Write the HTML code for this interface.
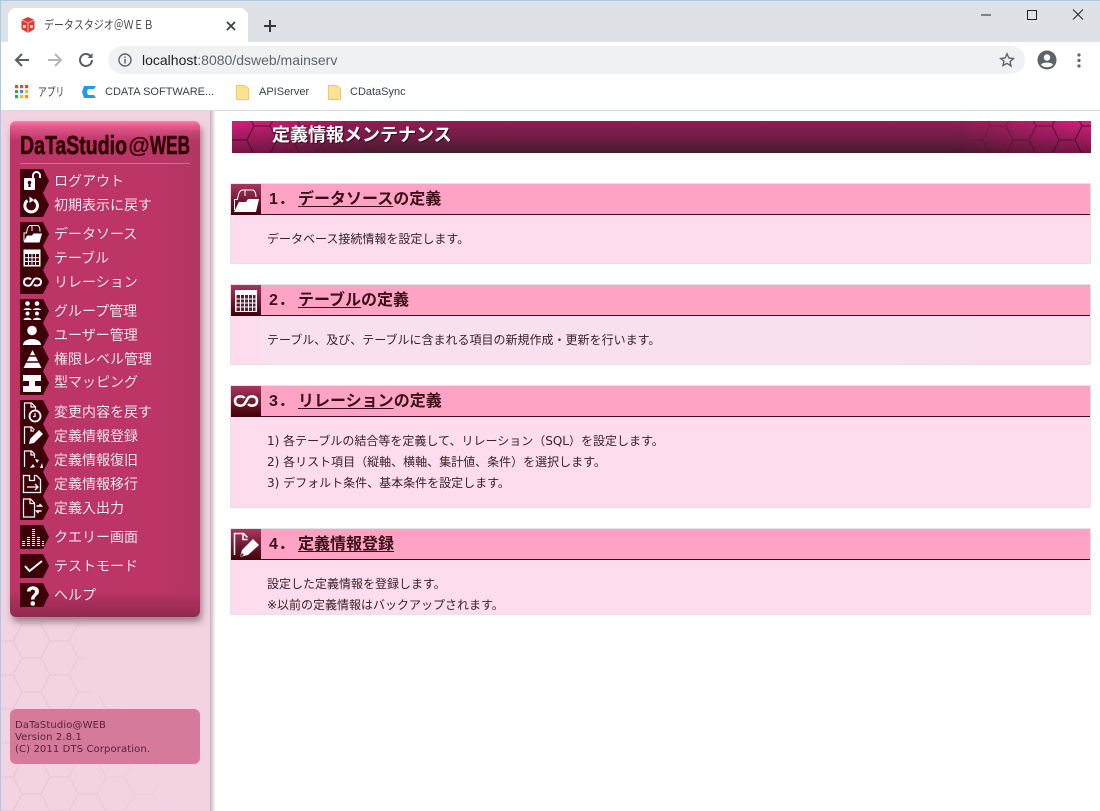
<!DOCTYPE html>
<html lang="ja"><head><meta charset="utf-8"><title>データスタジオ＠ＷＥＢ</title>
<style>
html,body{margin:0;padding:0;background:#fff;width:1100px;height:811px;overflow:hidden}
body{position:relative;font-family:"Liberation Sans","Noto Sans CJK JP",sans-serif;color:#333}
.a{position:absolute}
.t{position:absolute;white-space:nowrap;line-height:1}
.m{position:absolute;left:54px;white-space:nowrap;font-size:14px;line-height:20px;color:#fdeaf1;text-shadow:0 0 1px #8a2048}
.ic{position:absolute;left:20px;width:29px;height:24px}
.sec{position:absolute;left:230px;width:861px;border:1px solid #e6e2e4;border-top-color:#e8e4e6;box-sizing:border-box;background:#fddcee}
.h{position:absolute;left:0;top:0;right:0;height:30px;background:#ffa3c4;border-bottom:1px solid #3f0a1a;box-sizing:content-box}
.hi{position:absolute;left:0;top:0;width:30px;height:31px;background:linear-gradient(#a93560,#3f0009)}
.num{position:absolute;left:38px;top:6px;font-size:16px;font-weight:bold;line-height:20px;color:#3a1018;white-space:nowrap;letter-spacing:.5px}
.ti{position:absolute;left:67px;top:6px;font-size:16px;font-weight:bold;line-height:20px;color:#3a1018;white-space:nowrap}
.ti u{text-underline-offset:2px}
.b{position:absolute;left:36px;font-family:"DejaVu Sans","Noto Sans CJK JP",sans-serif;font-size:12px;line-height:16px;color:#3b2028;white-space:nowrap}
</style></head><body>

<!-- browser chrome -->
<div class="a" style="left:0;top:0;width:1100px;height:42px;background:#dee1e6"></div>
<div class="a" style="left:0;top:0;width:1100px;height:1px;background:#a5cbe9"></div>
<div class="a" style="left:8px;top:8px;width:240px;height:34px;background:#fff;border-radius:8px 8px 0 0"></div>
<div class="a" style="left:0;top:42px;width:1100px;height:68px;background:#fff"></div>
<div class="a" style="left:0;top:110px;width:1100px;height:1px;background:#d3dbe3"></div>
<div class="a" style="left:108px;top:46px;width:917px;height:28px;background:#f0f1f3;border-radius:14px"></div>

<svg class="a" style="left:20px;top:16px" width="16" height="18" viewBox="0 0 16 18"><path d="M8 1l6.500 3v9L8 17 1.500 13V4z" fill="#e0392f"/><path d="M1.500 4L8 7l6.500-3M8 7v10" stroke="#f8b0a8" fill="none" stroke-width="1"/><path d="M3 9h3v3H3zM10 9h3v3h-3z" fill="#fff" opacity=".7"/></svg>
<div class="t" style="left:44px;top:19px;font-size:12px;color:#45484d;transform:scaleX(.83);transform-origin:0 0">データスタジオ＠ＷＥＢ</div>
<svg class="a" style="left:226px;top:21px" width="10" height="10" viewBox="0 0 10 10"><path d="M1 1l8 8M9 1L1 9" stroke="#3c4043" stroke-width="1.800"/></svg>
<svg class="a" style="left:263px;top:19px" width="14" height="14" viewBox="0 0 14 14"><path d="M7 1v12M1 7h12" stroke="#33363a" stroke-width="2"/></svg>
<svg class="a" style="left:980px;top:8px" width="110" height="14" viewBox="0 0 110 14"><path d="M1 7h10" stroke="#222" stroke-width="1"/><rect x="47.500" y="2.500" width="9" height="9" fill="none" stroke="#222" stroke-width="1"/><path d="M93 1.500l10 10M103 1.500l-10 10" stroke="#222" stroke-width="1"/></svg>

<svg class="a" style="left:14px;top:51px" width="82" height="18" viewBox="0 0 82 18"><path d="M15 9H2M8 3L2 9l6 6" fill="none" stroke="#5a5d61" stroke-width="2"/><path d="M34 9h13M41 3l6 6-6 6" fill="none" stroke="#b4b6b9" stroke-width="2"/><path d="M78 9a6 6 0 1 1-1.800-4.300" fill="none" stroke="#5a5d61" stroke-width="2"/><path d="M78.500 2v5h-5z" fill="#5a5d61"/></svg>
<svg class="a" style="left:118px;top:53px" width="14" height="14" viewBox="0 0 14 14"><circle cx="7" cy="7" r="6" fill="none" stroke="#5f6368" stroke-width="1.400"/><path d="M7 6v4.500M7 3.500v1.500" stroke="#5f6368" stroke-width="1.500"/></svg>
<div class="t" style="left:142px;top:53px;font-size:14px;color:#5f6368"><span style="color:#202124">localhost</span>:8080/dsweb/mainserv</div>
<svg class="a" style="left:999px;top:52px" width="16" height="16" viewBox="0 0 16 16"><path d="M8 1.800l1.900 4.200 4.500.5-3.300 3.100.9 4.500L8 11.300l-4 2.300.9-4.500L1.600 6.500l4.500-.5z" fill="none" stroke="#5f6368" stroke-width="1.400"/></svg>
<svg class="a" style="left:1037px;top:50px" width="20" height="20" viewBox="0 0 20 20"><circle cx="10" cy="10" r="9.500" fill="#5f6368"/><circle cx="10" cy="7.500" r="3.200" fill="#fff"/><path d="M4 14.500c1.500-2.500 10.500-2.500 12 0-1.500 2-3.500 2.700-6 2.700s-4.500-.7-6-2.700z" fill="#fff"/></svg>
<svg class="a" style="left:1077px;top:53px" width="4" height="15" viewBox="0 0 4 15"><circle cx="2" cy="2" r="1.600" fill="#5f6368"/><circle cx="2" cy="7.500" r="1.600" fill="#5f6368"/><circle cx="2" cy="13" r="1.600" fill="#5f6368"/></svg>

<svg class="a" style="left:15px;top:85px" width="14" height="14" viewBox="0 0 14 14"><rect x="0" y="0" width="3.200" height="3.200" fill="#e8453c"/><rect x="5" y="0" width="3.200" height="3.200" fill="#e8453c"/><rect x="10" y="0" width="3.200" height="3.200" fill="#e8453c"/><rect x="0" y="5" width="3.200" height="3.200" fill="#34a853"/><rect x="5" y="5" width="3.200" height="3.200" fill="#4285f4"/><rect x="10" y="5" width="3.200" height="3.200" fill="#fbbc05"/><rect x="0" y="10" width="3.200" height="3.200" fill="#34a853"/><rect x="5" y="10" width="3.200" height="3.200" fill="#fbbc05"/><rect x="10" y="10" width="3.200" height="3.200" fill="#f28b30"/></svg>
<div class="t" style="left:38px;top:86px;font-size:12px;color:#3c4043;transform:scaleX(.73);transform-origin:0 0">アプリ</div>
<svg class="a" style="left:81px;top:85px" width="16" height="14" viewBox="0 0 16 14"><path d="M3 1h12l-2 3H7L6 7l1 3h6l2 3H3L1 7z" fill="#1d9bf0"/></svg>
<div class="t" style="left:105px;top:86px;font-size:11px;line-height:12px;color:#3c4043">CDATA SOFTWARE...</div>
<svg class="a" style="left:236px;top:85px" width="13" height="15" viewBox="0 0 13 15"><path d="M.5.500h8l4 3v11H.5z" fill="#fde293" stroke="#f4c95d"/></svg>
<div class="t" style="left:259px;top:86px;font-size:11px;line-height:12px;color:#3c4043">APIServer</div>
<svg class="a" style="left:328px;top:85px" width="13" height="15" viewBox="0 0 13 15"><path d="M.5.500h8l4 3v11H.5z" fill="#fde293" stroke="#f4c95d"/></svg>
<div class="t" style="left:350px;top:86px;font-size:11px;line-height:12px;color:#3c4043">CDataSync</div>

<!-- sidebar -->
<div class="a" style="left:0;top:111px;width:210px;height:700px;background:#f3d3e2"></div>
<div class="a" style="left:210px;top:111px;width:6px;height:700px;background:linear-gradient(90deg,#b9b5b8,#e8e6e7 60%,#fff)"></div>
<div class="a" style="left:0;top:1px;width:1px;height:810px;background:#a5cbe9"></div>

<svg class="a" style="left:1px;top:620px" width="209" height="191" viewBox="0 0 209 191">
<defs>
<pattern id="hx" x="12" y="4" width="56" height="34" patternUnits="userSpaceOnUse"><path d="M0 17L9 0H28L37 17L28 34H9ZM37 17H56" fill="none" stroke="#e4c4d3" stroke-width="1.100"/></pattern>
<linearGradient id="sf" x1="0" y1="0" x2="1" y2="0"><stop offset="0" stop-color="#fff"/><stop offset=".45" stop-color="#fff" stop-opacity=".7"/><stop offset=".85" stop-color="#fff" stop-opacity="0"/></linearGradient>
<mask id="sm"><path d="M0 0H85V70L209 130V191H0Z" fill="url(#sf)"/></mask>
</defs>
<rect width="209" height="191" fill="url(#hx)" mask="url(#sm)"/>
</svg>

<!-- menu -->
<div class="a" style="left:10px;top:121px;width:190px;height:496px;border-radius:6px;background:linear-gradient(#fb80aa 0,#e35a8c 5px,#bd3566 20px,#bd3566 470px,#a92f5a 480px,#8f2a50 496px);box-shadow:2px 5px 7px rgba(90,60,75,.55)"></div>
<div class="a" style="left:150px;top:130px;width:50px;height:465px;background:linear-gradient(90deg,rgba(150,60,90,0),rgba(150,60,95,.3))"></div>
<svg class="a" style="left:20px;top:133px" width="172" height="26" viewBox="0 0 172 26" font-family="Liberation Sans" font-weight="bold" font-size="26" fill="#2f0006">
<text x="0" y="21" textLength="107" lengthAdjust="spacingAndGlyphs" stroke="#2f0006" stroke-width=".6">DaTaStudio</text>
<text x="108" y="20" font-size="22" font-weight="normal" textLength="22" lengthAdjust="spacingAndGlyphs" stroke="#2f0006" stroke-width=".3">@</text>
<text x="130" y="21" textLength="40" lengthAdjust="spacingAndGlyphs" stroke="#2f0006" stroke-width=".6">WEB</text></svg>
<div class="a" style="left:20px;top:163px;width:170px;height:1px;background:#d66a92"></div>

<svg width="0" height="0" style="position:absolute"><defs>
<path id="p" d="M0 0H23L29 12L23 24H0Z" fill="#3d0008"/>
</defs></svg>

<svg class="ic" style="top:169px" viewBox="0 0 29 24"><use href="#p"/><rect x="4" y="9" width="11" height="12" rx="1" fill="#fff"/><path d="M13 9V6.500a3.500 3.500 0 0 1 7 0V9" fill="none" stroke="#fff" stroke-width="2"/><circle cx="9.500" cy="13.500" r="1.800" fill="#3d0008"/><path d="M8.700 14h1.600l.5 4h-2.600z" fill="#3d0008"/></svg>
<svg class="ic" style="top:193px" viewBox="0 0 29 24"><use href="#p"/><path d="M7.500 7.500A6.300 6.300 0 1 0 14 7" fill="none" stroke="#fff" stroke-width="3"/><path d="M9.500 3.500l4.500 3.500-4.500 3z" fill="#fff"/></svg>
<svg class="ic" style="top:222px" viewBox="0 0 29 24"><use href="#p"/><path d="M4 19V11h2.500C7 7 8 4 10 3.500h8c1.500 1 2 3 2 6M12 3.500V9" fill="none" stroke="#fff" stroke-width="1"/><path d="M3.500 20.500l3.500-7h5l1.500-2H22l-2.500 9z" fill="#fff"/></svg>
<svg class="ic" style="top:246px" viewBox="0 0 29 24"><use href="#p"/><rect x="3.500" y="3.500" width="17" height="17" fill="#fff"/><path d="M5 8h14v11H5z" fill="#3d0008"/><path d="M8.500 8v11M12 8v11M15.500 8v11M5 11.700h14M5 15.400h14" stroke="#fff" stroke-width="1"/></svg>
<svg class="ic" style="top:270px" viewBox="0 0 29 24"><use href="#p"/><path d="M11 9.500C9.500 7.700 4 7.500 4 12s5.500 4.300 7 2.500l3-5c1.500-1.800 7-1.500 7 2.500s-5.500 4.300-7 2.500" fill="none" stroke="#fff" stroke-width="2"/></svg>
<svg class="ic" style="top:299px" viewBox="0 0 29 24"><use href="#p"/><g fill="#fff"><circle cx="7.500" cy="4.500" r="2.300"/><path d="M3.500 11c0-2.500 8-2.500 8 0z"/><circle cx="7.500" cy="14.500" r="2"/><path d="M3.500 21c0-3 8-3 8 0z"/><circle cx="17" cy="4.500" r="2.300"/><path d="M13 11c0-2.500 8-2.500 8 0z"/><circle cx="17" cy="14.500" r="2"/><path d="M13 21c0-3 8-3 8 0z"/></g></svg>
<svg class="ic" style="top:323px" viewBox="0 0 29 24"><use href="#p"/><g fill="#fff"><circle cx="12" cy="7.500" r="4.800"/><path d="M3 22c0-8 18-8 18 0z"/></g></svg>
<svg class="ic" style="top:347px" viewBox="0 0 29 24"><use href="#p"/><path d="M12.500 3L21.500 21H3.500z" fill="#fff"/><path d="M3 9h19M3 15h19" stroke="#3d0008" stroke-width="1.500"/></svg>
<svg class="ic" style="top:371px" viewBox="0 0 29 24"><use href="#p"/><path d="M3 4h18v6h-6v5h6v6H3v-6h6v-5H3z" fill="#fff"/></svg>
<svg class="ic" style="top:400px" viewBox="0 0 29 24"><use href="#p"/><path d="M4.500 19V3h7l4 4v4M11 3v4h4" fill="none" stroke="#fff" stroke-width="1.200"/><circle cx="15" cy="16" r="5.500" fill="none" stroke="#fff" stroke-width="1.800"/><path d="M15 13v3.500h-2" fill="none" stroke="#fff" stroke-width="1.200"/></svg>
<svg class="ic" style="top:424px" viewBox="0 0 29 24"><use href="#p"/><path d="M4.500 20V3h7l3 3M11 3v4h3" fill="none" stroke="#fff" stroke-width="1.200"/><path d="M9 20l1-5 9-9 4 4-9 9z" fill="#fff"/></svg>
<svg class="ic" style="top:448px" viewBox="0 0 29 24"><use href="#p"/><path d="M4.500 19V3h7l3 3v4M11 3v4h3" fill="none" stroke="#fff" stroke-width="1.200"/><path d="M10 20l3-4 2 3zM15 11l4 1-2 3zM20 20l2-5 1 5z" fill="#fff"/></svg>
<svg class="ic" style="top:472px" viewBox="0 0 29 24"><use href="#p"/><path d="M3.500 20.500V3.500h6v5h5v-5h2l4 4v13z" fill="none" stroke="#fff" stroke-width="1.300"/><path d="M7 15h11M15 12l3 3-3 3" fill="none" stroke="#fff" stroke-width="1.300"/></svg>
<svg class="ic" style="top:496px" viewBox="0 0 29 24"><use href="#p"/><path d="M3.500 21V3h7l4 4v14zM10 3v4.500h4.500" fill="none" stroke="#fff" stroke-width="1.200"/><path d="M16.500 10h5l-2-2M21.500 15h-5l2 2" fill="none" stroke="#fff" stroke-width="1.400"/></svg>
<svg class="ic" style="top:525px" viewBox="0 0 29 24"><use href="#p"/><path d="M2 20.500h3M2 18.500h3M2 16.500h3M7 20.500h3M7 18.500h3M7 16.500h3M7 14.500h3M7 12.500h3M12 20.500h3M12 18.500h3M12 16.500h3M12 14.500h3M12 12.500h3M12 10.500h3M12 8.500h3M12 6.500h3M12 4.500h3M17 20.500h3M17 18.500h3M17 16.500h3M17 14.500h3M17 12.500h3M22 20.500h2M22 18.500h2M22 16.500h2" stroke="#fff" stroke-width="1"/></svg>
<svg class="ic" style="top:554px" viewBox="0 0 29 24"><use href="#p"/><path d="M5 12l4.500 5L22 7" fill="none" stroke="#fff" stroke-width="2"/></svg>
<svg class="ic" style="top:583px" viewBox="0 0 29 24"><use href="#p"/><path d="M7 8.500c0-7 12-7 12 0 0 4-4.500 4-4.500 8h-3.500c0-5 4-5 4-8 0-2.500-4.500-2.500-4.500 0z" fill="#fff"/><circle cx="12.800" cy="20.500" r="2.300" fill="#fff"/></svg>

<div class="m" style="top:171px">ログアウト</div>
<div class="m" style="top:195px">初期表示に戻す</div>
<div class="m" style="top:224px">データソース</div>
<div class="m" style="top:248px">テーブル</div>
<div class="m" style="top:272px">リレーション</div>
<div class="m" style="top:301px">グループ管理</div>
<div class="m" style="top:325px">ユーザー管理</div>
<div class="m" style="top:349px">権限レベル管理</div>
<div class="m" style="top:372px">型マッピング</div>
<div class="m" style="top:402px">変更内容を戻す</div>
<div class="m" style="top:426px">定義情報登録</div>
<div class="m" style="top:450px">定義情報復旧</div>
<div class="m" style="top:474px">定義情報移行</div>
<div class="m" style="top:498px">定義入出力</div>
<div class="m" style="top:527px">クエリー画面</div>
<div class="m" style="top:556px">テストモード</div>
<div class="m" style="top:585px">ヘルプ</div>

<div class="a" style="left:10px;top:709px;width:190px;height:55px;border-radius:6px;background:#d67a9c"></div>
<div class="a" style="left:15px;top:720px;font-family:'DejaVu Sans',sans-serif;font-size:10px;line-height:12px;letter-spacing:.12px;color:#55233a;white-space:nowrap">DaTaStudio@WEB<br>Version 2.8.1<br>(C) 2011 DTS Corporation.</div>

<!-- title banner -->
<svg class="a" style="left:232px;top:121px" width="859" height="32" viewBox="0 0 859 32">
<defs>
<linearGradient id="bg" x1="0" y1="0" x2="0" y2="1"><stop offset="0" stop-color="#8b1f52"/><stop offset=".45" stop-color="#741d47"/><stop offset="1" stop-color="#471a2e"/></linearGradient>
<pattern id="bh" x="-8" y="-9" width="46" height="28" patternUnits="userSpaceOnUse">
<g fill="#d6217f" stroke="#4a1530" stroke-width="1">
<path d="M0 14L7 0H23L30 14L23 28H7Z"/>
<path d="M23 0L30-14H46L53 0L46 14H30Z"/>
<path d="M23 28L30 14H46L53 28L46 42H30Z"/>
<path d="M-23 0L-16-14H0L7 0L0 14H-16Z"/>
<path d="M-23 28L-16 14H0L7 28L0 42H-16Z"/>
</g></pattern>
<linearGradient id="lf" x1="0" y1="0" x2="1" y2="0"><stop offset="0" stop-color="#fff"/><stop offset=".04" stop-color="#fff" stop-opacity=".75"/><stop offset=".1" stop-color="#fff" stop-opacity=".3"/><stop offset=".17" stop-color="#fff" stop-opacity="0"/><stop offset=".84" stop-color="#fff" stop-opacity="0"/><stop offset=".93" stop-color="#fff" stop-opacity=".5"/><stop offset="1" stop-color="#fff"/></linearGradient>
<linearGradient id="ov" x1="0" y1="0" x2="0" y2="1"><stop offset="0" stop-color="#2a0a18" stop-opacity="0"/><stop offset="1" stop-color="#2a0a18" stop-opacity=".55"/></linearGradient>
<mask id="bm"><rect width="859" height="32" fill="url(#lf)"/></mask>
</defs>
<rect width="859" height="32" fill="url(#bg)"/>
<g mask="url(#bm)"><rect width="859" height="32" fill="url(#bh)"/><rect width="859" height="32" fill="url(#ov)"/></g>
</svg>
<div class="t" style="left:272px;top:125px;font-size:18px;line-height:20px;font-weight:bold;color:#fff;text-shadow:1px 1px 0 #3a0a20">定義情報メンテナンス</div>

<!-- sections -->
<div class="sec" style="top:183px;height:81px">
<div class="h"></div><div class="hi"><svg width="30" height="30" viewBox="0 0 30 30" style="position:absolute;left:0;top:1px"><path d="M3.500 25V14.500h3C7 10 8 6 11 5h11c2 1 3 4 3 7M14 5v6" fill="none" stroke="#fff" stroke-width="1"/><path d="M3 27l5-10h7l2-3h11l-3 13z" fill="#fff"/></svg></div>
<div class="num">1．</div><div class="ti"><u>データソース</u>の定義</div>
<div class="b" style="top:47px">データベース接続情報を設定します。</div>
</div>

<div class="sec" style="top:284px;height:81px;background:linear-gradient(90deg,#fddcee 30px,#f8e0ef 30px,#f8e0ef 460px,#f9dfee)">
<div class="h"></div><div class="hi"><svg width="30" height="30" viewBox="0 0 30 30" style="position:absolute;left:0;top:1px"><rect x="4" y="4" width="22" height="22" fill="#fff"/><rect x="5.500" y="9" width="19" height="16" fill="#5b2030"/><path d="M9.500 9v16M13.500 9v16M17.500 9v16M21.500 9v16M5.500 13h19M5.500 17h19M5.500 21h19" stroke="#fff" stroke-width="1"/></svg></div>
<div class="num">2．</div><div class="ti"><u>テーブル</u>の定義</div>
<div class="b" style="top:47px">テーブル、及び、テーブルに含まれる項目の新規作成・更新を行います。</div>
</div>

<div class="sec" style="top:385px;height:123px">
<div class="h"></div><div class="hi"><svg width="30" height="30" viewBox="0 0 30 30" style="position:absolute;left:0;top:1px"><path d="M13.500 11C11.500 8.500 4 8.500 4 14s7.500 5.500 9.500 3l3.500-6c2-2.500 9-2.500 9 3s-7 5.500-9 3" fill="none" stroke="#fff" stroke-width="2.600"/></svg></div>
<div class="num">3．</div><div class="ti"><u>リレーション</u>の定義</div>
<div class="b" style="top:47px">1) 各テーブルの結合等を定義して、リレーション（SQL）を設定します。</div>
<div class="b" style="top:68px">2) 各リスト項目（縦軸、横軸、集計値、条件）を選択します。</div>
<div class="b" style="top:89px">3) デフォルト条件、基本条件を設定します。</div>
</div>

<div class="sec" style="top:528px;height:87px">
<div class="h"></div><div class="hi"><svg width="30" height="30" viewBox="0 0 30 30" style="position:absolute;left:0;top:1px"><path d="M3.500 25V3.500h9l4 4M12 3.500v6h4.500" fill="none" stroke="#fff" stroke-width="1.500"/><path d="M9 27l2-7 11-11 6 6-11 10z" fill="#fff"/><path d="M9 27l2-4 2 2z" fill="#5b2030"/></svg></div>
<div class="num">4．</div><div class="ti"><u>定義情報登録</u></div>
<div class="b" style="top:47px">設定した定義情報を登録します。</div>
<div class="b" style="top:68px">※以前の定義情報はバックアップされます。</div>
</div>

</body></html>
